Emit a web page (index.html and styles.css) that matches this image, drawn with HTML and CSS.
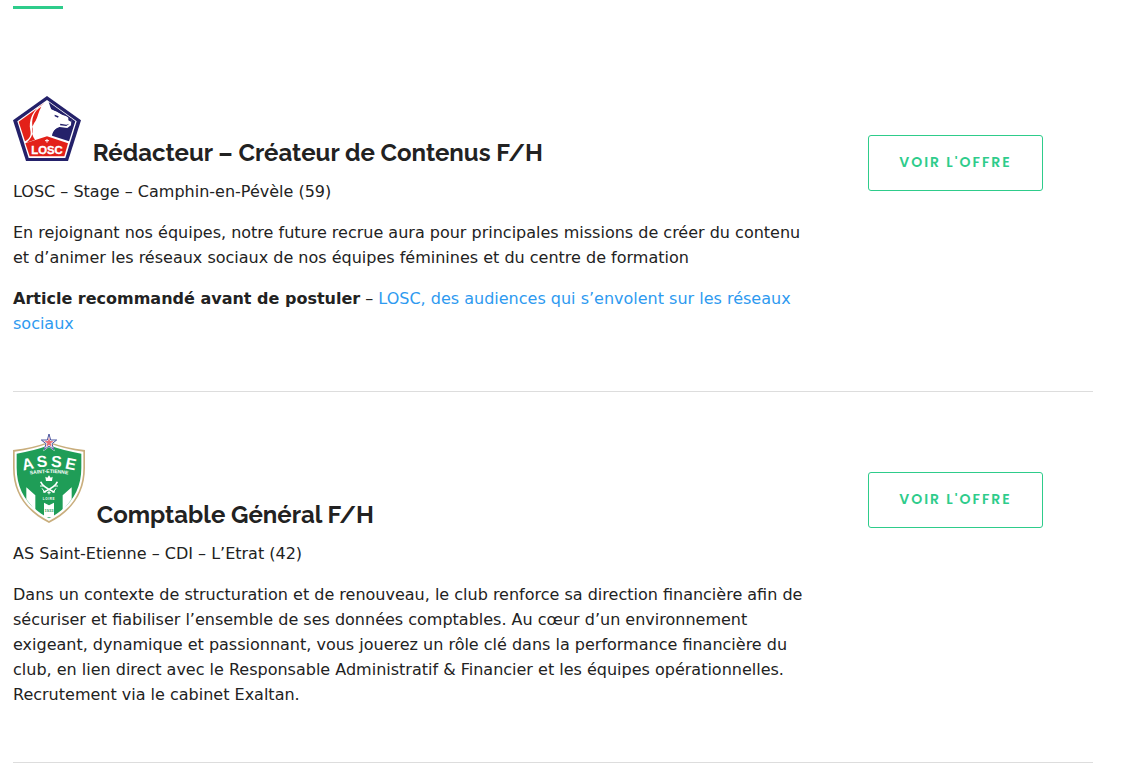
FILE: index.html
```html
<!DOCTYPE html>
<html lang="fr">
<head>
    <meta charset="UTF-8">
    <meta name="viewport" content="width=device-width, initial-scale=1.0">
    <title>Offres d'emploi</title>
    <link rel="stylesheet" href="styles.css">
</head>
<body>
    <main class="offres">
        <div class="separateur"></div>

        <article class="offre">
            <div class="offre-texte">
                <h3>
                    <svg class="logo-losc" viewBox="24 18 204 195" role="img" aria-label="LOSC">
                        <path fill="#24216a" d="M126 18L228 91L189 213H63L24 91Z"/>
                        <path fill="#fff" d="M126 30L215 94L181 204H71L37 94Z"/>
                        <path fill="#e32119" d="M120 38L41 95L60 154C76 146 79 134 76 121C70 90 82 58 120 38Z"/>
                        <path fill="#e32119" d="M109 50C86 62 78 89 83 111C86 129 80 146 64 158L90 149C76 130 80 108 92 92C99 79 100 65 109 50Z"/>
                        <path fill="#24216a" d="M131 36L211 94L192 154L141 137C143 123 151 112 164 111L187 114L198 106L199 90L184 79L171 74L155 65L139 60Z"/>
                        <path fill="#fff" d="M125 40L139 58L154 65L169 74L188 83L197 92L195 104L184 112L166 110C151 114 143 124 139 135L126 132L91 146C78 130 82 110 94 94L103 70L119 63Z"/>
                        <path fill="#24216a" d="M149 74L161 79L159 83L149 79ZM190 82L200 86L199 96L190 91ZM166 101L184 104L193 101L184 108L165 106Z"/>
                        <path fill="#e32119" d="M126 139L189 160L178 199H74L61 160Z"/>
                        <path stroke="#fff" stroke-width="3" d="M126 147V158M120 152H132"/>
                        <text class="losc-nom" x="126" y="191" text-anchor="middle">LOSC</text>
                    </svg>
                    Rédacteur – Créateur de Contenus F/H
                </h3>
                <p>LOSC – Stage – Camphin-en-Pévèle (59)</p>
                <p>En rejoignant nos équipes, notre future recrue aura pour principales missions de créer du contenu et d’animer les réseaux sociaux de nos équipes féminines et du centre de formation</p>
                <p><strong>Article recommandé avant de postuler</strong> – <a href="#">LOSC, des audiences qui s’envolent sur les réseaux sociaux</a></p>
            </div>
            <div class="offre-action">
                <a class="bouton" href="#">Voir l'offre</a>
            </div>
        </article>

        <article class="offre">
            <div class="offre-texte">
                <h3>
                    <svg class="logo-asse" viewBox="24 15 216 270" role="img" aria-label="AS Saint-Etienne">
                        <path fill="#c9ae7d" d="M24 66Q82 60 132 41Q182 60 240 66V119C240 195 201 250 132 285C63 250 24 195 24 119Z"/>
                        <path fill="#fff" d="M29 71Q84 64 132 46Q180 64 235 71V119C235 192 199 245 132 279C65 245 29 192 29 119Z"/>
                        <path fill="#1f9d57" d="M35 77Q86 69 132 52Q178 69 229 77V119C229 188 195 238 132 271C69 238 35 188 35 119Z"/>
                        <path fill="#fff" d="M64 178L91 202V248L64 214ZM200 178L173 202V248L200 214ZM117 224L132 232L147 224V268H117Z"/>
                        <path fill="#fff" d="M132 12L139 33H160L143 47L149 70L132 57L115 70L121 47L104 33H125Z"/>
                        <path fill="none" stroke="#4b559f" stroke-width="3" d="M132 18L137 36H155L141 47L146 65L132 54L118 65L123 47L109 36H127Z"/>
                        <path fill="#e66d78" d="M132 28L135 39L146 40L137 46L140 56L132 50L124 56L127 46L118 40L129 39Z"/>
                        <g class="asse-nom" text-anchor="middle">
                            <text transform="translate(72 124) rotate(-12)">A</text>
                            <text transform="translate(112 117) rotate(-4)">S</text>
                            <text transform="translate(153 117) rotate(4)">S</text>
                            <text transform="translate(194 124) rotate(12)">E</text>
                        </g>
                        <path id="arc-ville" fill="none" d="M70 140Q132 130 194 140"/>
                        <text class="asse-ville"><textPath href="#arc-ville" startOffset="50%" text-anchor="middle">SAINT-ETIENNE</textPath></text>
                        <path fill="#fff" d="M121 146L127 149L132 142L137 149L143 146L141 159H123Z"/>
                        <path fill="none" stroke="#fff" stroke-width="5" d="M107 161Q112 176 149 193M157 161Q152 176 115 193"/>
                        <path stroke="#fff" stroke-width="3" d="M111 181L121 195M153 181L143 195M105 174H115M149 174H159M127 194H137M132 189V199"/>
                        <text class="asse-loire" x="132" y="215" text-anchor="middle">LOIRE</text>
                        <text class="asse-annee" x="132" y="251" text-anchor="middle">1933</text>
                    </svg>
                    Comptable Général F/H
                </h3>
                <p>AS Saint-Etienne – CDI – L’Etrat (42)</p>
                <p>Dans un contexte de structuration et de renouveau, le club renforce sa direction financière afin de sécuriser et fiabiliser l’ensemble de ses données comptables. Au cœur d’un environnement exigeant, dynamique et passionnant, vous jouerez un rôle clé dans la performance financière du club, en lien direct avec le Responsable Administratif &amp; Financier et les équipes opérationnelles. Recrutement via le cabinet Exaltan.</p>
            </div>
            <div class="offre-action">
                <a class="bouton" href="#">Voir l'offre</a>
            </div>
        </article>
    </main>
</body>
</html>
```
FILE: styles.css
```css
body {
    margin: 0;
    background-color: #fff;
    color: #222;
    font-family: Verdana, "DejaVu Sans", sans-serif;
    font-size: 16px;
    line-height: 25px;
}

.offres {
    padding: 6px 40px 0 13px;
}

.separateur {
    width: 50px;
    height: 3px;
    margin-bottom: 46px;
    background-color: #2ecc8b;
}

.offre {
    display: grid;
    grid-template-columns: 1fr 275px;
    padding: 41px 0 39px;
    border-bottom: 1px solid #ddd;
}

.offre h3 {
    margin: 0 0 10px;
    font-family: Raleway, Lato, sans-serif;
    font-size: 24px;
    font-weight: 700;
    line-height: 32px;
}

.offre h3 svg {
    margin-right: 6px;
}

.offre p {
    margin: 0 0 16px;
}

.offre a {
    color: #2e9af0;
    text-decoration: none;
}

.offre-action {
    padding-top: 39px;
    text-align: center;
}

.offre .bouton {
    display: inline-block;
    padding: 13px 30px 15px;
    border: 1px solid #2ecc8b;
    border-radius: 3px;
    color: #2ecc8b;
    font-family: Poppins, Inter, sans-serif;
    font-size: 14px;
    font-weight: 600;
    line-height: 26px;
    letter-spacing: 2px;
    text-transform: uppercase;
}

/* logos des clubs */
.logo-losc {
    width: 68px;
    height: 65px;
}

.logo-asse {
    width: 72px;
    height: 90px;
}

.losc-nom {
    fill: #fff;
    stroke: #fff;
    font-family: "Liberation Sans", sans-serif;
    font-size: 34px;
    font-weight: 700;
}

.asse-nom,
.asse-ville,
.asse-loire {
    fill: #fff;
    font-family: "Liberation Sans", sans-serif;
    font-weight: 700;
}

.asse-nom {
    font-size: 48px;
}

.asse-ville {
    font-size: 15px;
}

.asse-loire {
    font-size: 9px;
    letter-spacing: 2px;
}

.asse-annee {
    fill: #1f9d57;
    font-family: "Liberation Sans", sans-serif;
    font-size: 12px;
    font-weight: 700;
}
```
